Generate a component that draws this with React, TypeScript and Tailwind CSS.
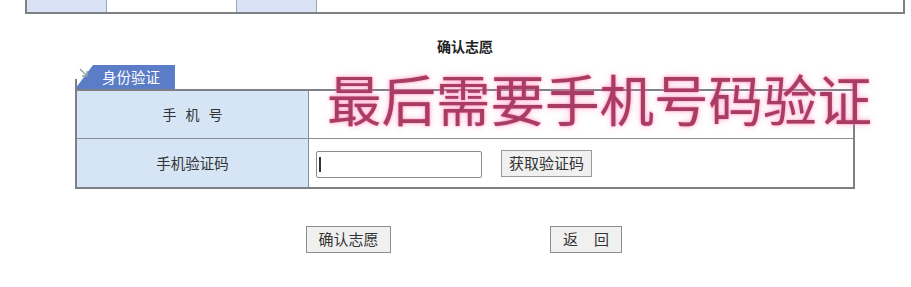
import React from "react";

export default function App() {
  const cjk = "font-['Noto_Sans_CJK_SC','Noto_Sans_CJK_TC',sans-serif]";
  return (
    <div className={`relative w-[911px] h-[287px] overflow-hidden bg-white text-[#222] ${cjk}`}>
      {/* cut-off top table */}
      <div className="ml-[25px] w-[880px] h-[14px] flex border-l-2 border-r-2 border-b-2 border-[#7d8186]">
        <div className="w-[80px] bg-[#d9e3f5] border-r border-[#9aa7b8]" />
        <div className="w-[130px] bg-white border-r border-[#9aa7b8]" />
        <div className="w-[80px] bg-[#d9e3f5] border-r border-[#9aa7b8]" />
        <div className="flex-1 bg-white" />
      </div>

      {/* title */}
      <div className="ml-[25px] w-[880px] mt-[24px] h-[16px] leading-[16px] text-center text-[14px] font-bold text-[#222]">
        确认志愿
      </div>

      {/* identity block */}
      <div className="ml-[75px] w-[780px] mt-[11px]">
        <div className="relative w-[100px] h-[24px]">
          <div className="absolute inset-0 bg-[#5b7cc6] [clip-path:polygon(0_100%,18px_0,100%_0,100%_100%)]" />
          <div className="absolute left-0 top-[14px] h-[10px] w-[2px] bg-[#7d8186]" />
          <svg className="absolute left-[3px] top-[2px]" width="12" height="12" viewBox="0 0 12 12">
            <path d="M2 2 L9 9 M9 4 L9 9 L4 9" fill="none" stroke="#8fa49a" strokeWidth="1.4" />
          </svg>
          <div className="absolute left-[27px] top-0 h-[24px] leading-[24px] text-[14.5px] text-white">
            身份验证
          </div>
        </div>
        <div className="border-2 border-[#7d8186]">
          <div className="flex h-[48px] border-b border-[#8a8f96]">
            <div className="w-[232px] bg-[#d5e5f6] border-r border-[#8a8f96] flex items-center justify-center gap-[9px] text-[14px] text-[#333]">
              <span>手</span>
              <span>机</span>
              <span>号</span>
            </div>
            <div className="flex-1 bg-white" />
          </div>
          <div className="flex h-[48px]">
            <div className="w-[232px] bg-[#d5e5f6] border-r border-[#8a8f96] flex items-center justify-center text-[14.5px] text-[#333]">
              手机验证码
            </div>
            <div className="flex-1 bg-white flex items-center pl-[7px]">
              <div className="relative w-[166px] h-[27px] mt-[2px] border border-[#8b8b8b] rounded-[2px] bg-white">
                <div className="absolute left-[2px] top-[5px] w-[2px] h-[15px] bg-[#333]" />
              </div>
              <div className="ml-[19px] w-[91px] h-[27px] border border-[#9a9a9a] bg-[#f0f0f0] flex items-center justify-center whitespace-nowrap text-[15px] text-[#333]">
                获取验证码
              </div>
            </div>
          </div>
        </div>
      </div>

      {/* buttons */}
      <div className="flex mt-[37px]">
        <div className="ml-[306px] w-[85px] h-[27px] border border-[#8d8d8d] bg-[#f0f0f0] flex items-center justify-center whitespace-nowrap text-[15px] text-[#333]">
          确认志愿
        </div>
        <div className="ml-[159px] w-[72px] h-[27px] border border-[#8d8d8d] bg-[#f0f0f0] flex items-center justify-center gap-[16px] whitespace-nowrap text-[15px] text-[#333]">
          <span>返</span>
          <span>回</span>
        </div>
      </div>

      {/* overlay annotation */}
      <div className="absolute left-[327px] top-[71px] text-[54.5px] leading-[54px] font-normal whitespace-nowrap text-[#a83d64] [text-shadow:0_0_2px_rgba(255,90,150,0.8),0_0_6px_rgba(255,130,180,0.6)]">
        最后需要手机号码验证
      </div>
    </div>
  );
}
